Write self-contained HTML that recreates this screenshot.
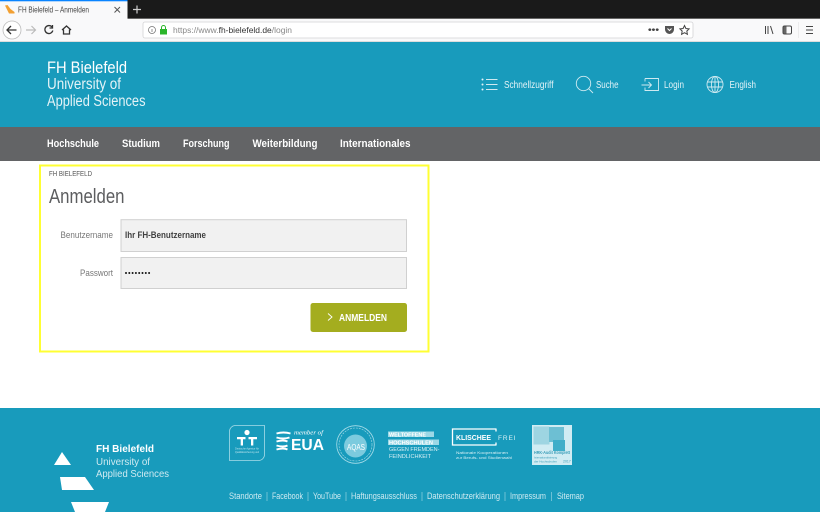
<!DOCTYPE html>
<html lang="de"><head><meta charset="utf-8"><title>FH Bielefeld - Anmelden</title>
<style>
html,body{margin:0;padding:0;width:820px;height:512px;overflow:hidden;background:#fff}
svg{display:block;filter:blur(.3px)}
text{font-family:"Liberation Sans",sans-serif}
</style></head><body>
<svg width="820" height="512" viewBox="0 0 820 512" xmlns="http://www.w3.org/2000/svg">
<!-- browser chrome -->
<rect width="820" height="19" fill="#1a1a1a"/>
<rect y="18" width="820" height="1" fill="#666"/>
<rect width="127.500" height="19" fill="#f9f9fa"/>
<rect width="127.500" height="1.300" fill="#0a84ff"/>
<path d="M5 5.500l2.500-.5 3 4 4 3 0 1.500H9z" fill="#f2a033"/>
<text x="18" y="12.500" font-size="8" fill="#444" textLength="71" lengthAdjust="spacingAndGlyphs">FH Bielefeld – Anmelden</text>
<path d="M114.500 7l5.500 5.500M120 7l-5.500 5.500" stroke="#555" stroke-width="1" fill="none"/>
<path d="M137 5.500v8M133 9.500h8" stroke="#ccc" stroke-width="1.200"/>
<rect y="19" width="820" height="23" fill="#f9f9fa"/>
<rect y="41" width="820" height="1" fill="#ddd"/>
<circle cx="12" cy="30" r="9" fill="#fff" stroke="#bbb" stroke-width=".8"/>
<path d="M16.500 30h-9M11 26l-4 4 4 4" stroke="#333" stroke-width="1.300" fill="none"/>
<path d="M26 30h9M31.500 26l4 4-4 4" stroke="#bbb" stroke-width="1.200" fill="none"/>
<path d="M52 27a4 4 0 1 0 .8 3.500M52.500 25v3h-3" stroke="#333" stroke-width="1.300" fill="none"/>
<path d="M62 30l4.500-4 4.500 4M63.500 29.500v4.500h6v-4.500" stroke="#333" stroke-width="1.300" fill="none"/>
<rect x="143" y="22" width="550" height="16" rx="2" fill="#fff" stroke="#d3d3d5" stroke-width=".8"/>
<circle cx="152" cy="30" r="3.500" fill="none" stroke="#777" stroke-width=".8"/>
<path d="M152 29v3" stroke="#777" stroke-width=".8"/>
<rect x="160" y="29" width="7" height="5.500" fill="#2ab52a"/>
<path d="M161.500 29v-1.500a2 2 0 0 1 4 0V29" stroke="#2ab52a" fill="none"/>
<text x="173" y="33" font-size="8.500" fill="#888" textLength="119" lengthAdjust="spacingAndGlyphs">https://www.<tspan fill="#333">fh-bielefeld.de</tspan>/login</text>
<text x="648" y="32.500" font-size="9" font-weight="bold" fill="#444" textLength="11" lengthAdjust="spacingAndGlyphs">•••</text>
<path d="M665 26h9v3.500a4.500 4.500 0 0 1-9 0z" fill="#555"/>
<path d="M667.500 28.500l2 2 2-2" stroke="#fff" fill="none"/>
<path d="M684.500 25.500l1.400 3 3.200.4-2.300 2.200.6 3.200-2.900-1.600-2.900 1.600.6-3.200-2.300-2.200 3.200-.4z" fill="none" stroke="#444"/>
<path d="M765.500 26v8M768 26v8M770.500 26l2.500 8" stroke="#444" stroke-width="1" fill="none"/>
<rect x="783" y="26" width="8.500" height="8" rx="1.500" fill="none" stroke="#444"/>
<rect x="783.500" y="26.500" width="3" height="7" fill="#666"/>
<path d="M806 26.500h7M806 30h7M806 33.500h7" stroke="#444" stroke-width="1.100"/>
<path d="M798.500 22v16" stroke="#e6e6e6" stroke-width=".7"/>
<!-- header -->
<rect y="42" width="820" height="85" fill="#189bbc"/>
<text x="47" y="73" font-size="16.500" fill="#fff" textLength="80" lengthAdjust="spacingAndGlyphs">FH Bielefeld</text>
<text x="47" y="89" font-size="15.500" fill="#e4f3f7" textLength="74" lengthAdjust="spacingAndGlyphs">University of</text>
<text x="47" y="106" font-size="15.500" fill="#e4f3f7" textLength="98.500" lengthAdjust="spacingAndGlyphs">Applied Sciences</text>
<g fill="#e3f3f7" font-size="10.500">
<text x="504" y="88" textLength="49.500" lengthAdjust="spacingAndGlyphs">Schnellzugriff</text>
<text x="596" y="88" textLength="22.500" lengthAdjust="spacingAndGlyphs">Suche</text>
<text x="664" y="88" textLength="20" lengthAdjust="spacingAndGlyphs">Login</text>
<text x="729.500" y="88" textLength="26.500" lengthAdjust="spacingAndGlyphs">English</text>
</g>
<g style="stroke:#cfeaf1;fill:none;stroke-width:.9">
<path d="M486 79.500h11.500M486 84.500h11.500M486 89.500h11.500"/>
<circle cx="583.500" cy="83.500" r="7.200"/>
<path d="M588.500 88.500l4.500 4.500"/>
<path d="M645 78.500h13.500v12H645v-3M645 81.500v-3M641.500 85h10M648.500 82l3 3-3 3"/>
<circle cx="715" cy="84.500" r="8"/>
<ellipse cx="715" cy="84.500" rx="3.600" ry="8"/>
<path d="M715 76.500v16M707.300 82h15.400M707.300 87h15.400"/>
</g>
<circle cx="482.500" cy="79.500" r="1" fill="#e3f3f7"/><circle cx="482.500" cy="84.500" r="1" fill="#e3f3f7"/><circle cx="482.500" cy="89.500" r="1" fill="#e3f3f7"/>
<!-- nav -->
<rect y="127" width="820" height="34" fill="#636466"/>
<g fill="#fff" font-size="11" font-weight="bold">
<text x="47" y="147" textLength="52" lengthAdjust="spacingAndGlyphs">Hochschule</text>
<text x="122" y="147" textLength="38" lengthAdjust="spacingAndGlyphs">Studium</text>
<text x="183" y="147" textLength="46.500" lengthAdjust="spacingAndGlyphs">Forschung</text>
<text x="252.500" y="147" textLength="65" lengthAdjust="spacingAndGlyphs">Weiterbildung</text>
<text x="340" y="147" textLength="70.500" lengthAdjust="spacingAndGlyphs">Internationales</text>
</g>
<!-- form -->
<rect x="40" y="165.500" width="388.500" height="186" fill="#fff" stroke="#ffff33" stroke-width="2"/>
<text x="49" y="176" font-size="7.500" fill="#555" textLength="43" lengthAdjust="spacingAndGlyphs">FH BIELEFELD</text>
<text x="49" y="203" font-size="20" fill="#5c5d5f" textLength="75.500" lengthAdjust="spacingAndGlyphs">Anmelden</text>
<text x="113" y="238" font-size="9.500" fill="#777" text-anchor="end" textLength="52.500" lengthAdjust="spacingAndGlyphs">Benutzername</text>
<text x="113" y="276" font-size="9.500" fill="#777" text-anchor="end" textLength="33" lengthAdjust="spacingAndGlyphs">Passwort</text>
<rect x="121" y="219.700" width="285.500" height="31.800" fill="#f1f1f1" stroke="#d0d0d0" stroke-width="1"/>
<rect x="121" y="257.500" width="285.500" height="31" fill="#f1f1f1" stroke="#d0d0d0" stroke-width="1"/>
<text x="125" y="238" font-size="9.500" fill="#222" font-weight="bold" textLength="81" lengthAdjust="spacingAndGlyphs" opacity=".85">Ihr FH-Benutzername</text>
<g fill="#111"><circle cx="126" cy="273" r="1"/><circle cx="129.300" cy="273" r="1"/><circle cx="132.600" cy="273" r="1"/><circle cx="135.900" cy="273" r="1"/><circle cx="139.200" cy="273" r="1"/><circle cx="142.500" cy="273" r="1"/><circle cx="145.800" cy="273" r="1"/><circle cx="149.100" cy="273" r="1"/></g>
<rect x="310.500" y="303" width="96.500" height="29" rx="2.500" fill="#a4ad1f"/>
<path d="M328 313.500l4 3.500-4 3.500" stroke="#fff" stroke-width=".9" fill="none"/>
<text x="339" y="321" font-size="10" font-weight="bold" fill="#fff" textLength="48" lengthAdjust="spacingAndGlyphs">ANMELDEN</text>
<!-- footer -->
<rect y="408" width="820" height="104" fill="#189bbc"/>
<path d="M54 465L62 452 71 465z" fill="#fff"/>
<path d="M60 477H85L94 490H62z" fill="#fff"/>
<path d="M71 502H109L105 512H75z" fill="#fff"/>
<text x="96" y="452" font-size="10.500" font-weight="bold" fill="#fff" textLength="58" lengthAdjust="spacingAndGlyphs">FH Bielefeld</text>
<text x="96" y="465" font-size="10.500" fill="#cfeaf1" textLength="54" lengthAdjust="spacingAndGlyphs">University of</text>
<text x="96" y="477" font-size="10.500" fill="#cfeaf1" textLength="73" lengthAdjust="spacingAndGlyphs">Applied Sciences</text>
<g font-size="8.800" fill="#cdeaf1">
<text x="229" y="499" textLength="33" lengthAdjust="spacingAndGlyphs">Standorte</text>
<text x="272" y="499" textLength="31" lengthAdjust="spacingAndGlyphs">Facebook</text>
<text x="313" y="499" textLength="28" lengthAdjust="spacingAndGlyphs">YouTube</text>
<text x="351" y="499" textLength="66" lengthAdjust="spacingAndGlyphs">Haftungsausschluss</text>
<text x="427" y="499" textLength="73" lengthAdjust="spacingAndGlyphs">Datenschutzerklärung</text>
<text x="510" y="499" textLength="36" lengthAdjust="spacingAndGlyphs">Impressum</text>
<text x="557" y="499" textLength="27" lengthAdjust="spacingAndGlyphs">Sitemap</text>
</g>
<path d="M267 492v9M308 492v9M346 492v9M422 492v9M505 492v9M551.500 492v9" stroke="#8fd0e0" stroke-width=".7"/>
<!-- logos -->
<path d="M235 425.500h29.500v29a6 6 0 0 1-6 6H229.500v-29.500a6 6 0 0 1 5.500-5.500z" fill="none" stroke="#a9dde9" stroke-width=".8"/>
<circle cx="247" cy="432.500" r="2.600" fill="#fff"/>
<path d="M237 437h8.500v2.200h-2.500v6.300h-2.300v-6.300H237zM248.500 437h8.500v2.200h-3.700v6.300H251v-6.300h-2.500z" fill="#fff"/>
<text x="235" y="449.500" font-size="2.500" fill="#bfe5ee" textLength="24" lengthAdjust="spacingAndGlyphs">Deutsche Agentur für</text>
<text x="235" y="453" font-size="2.500" fill="#bfe5ee" textLength="24" lengthAdjust="spacingAndGlyphs">Qualitätssicherung und</text>
<path d="M276.500 433.500q7-2 14 0M276.500 437.500q7 2 13 0M276.500 441.500q7-2 11 0M276.500 445.500q7 2 11 0M276.500 449.500q7-2 11 0" stroke="#fff" stroke-width="1.900" fill="none"/>
<text x="294" y="434.500" font-size="6" font-style="italic" fill="#fff" textLength="29" lengthAdjust="spacingAndGlyphs" style="font-family:'Liberation Serif',serif">member of</text>
<text x="291" y="450" font-size="16" font-weight="bold" fill="#fff" textLength="33" lengthAdjust="spacingAndGlyphs">EUA</text>
<circle cx="355.500" cy="444.500" r="18.800" fill="none" stroke="#a9dde9" stroke-width=".8"/>
<circle cx="355.500" cy="444.500" r="16.500" fill="none" stroke="#a9dde9" stroke-width=".6" stroke-dasharray="2 1"/>
<circle cx="355.500" cy="446" r="11.500" fill="#7ccbde"/>
<text x="347" y="450" font-size="8" fill="#fff" textLength="18" lengthAdjust="spacingAndGlyphs">AQAS</text>
<path d="M388 431.500h46v5.500h-46zM388 439.500h51v5.500h-51z" fill="#9cd8e6"/>
<text x="389" y="436.500" font-size="5.500" font-weight="bold" fill="#fff" textLength="37" lengthAdjust="spacingAndGlyphs">WELTOFFENE</text>
<text x="389" y="444.500" font-size="5.500" font-weight="bold" fill="#fff" textLength="44" lengthAdjust="spacingAndGlyphs">HOCHSCHULEN</text>
<text x="389" y="451" font-size="5.500" fill="#d8f0f5" textLength="50.500" lengthAdjust="spacingAndGlyphs">GEGEN FREMDEN-</text>
<text x="389" y="458" font-size="5.500" fill="#d8f0f5" textLength="42" lengthAdjust="spacingAndGlyphs">FEINDLICHKEIT</text>
<path d="M496 429h-43.500v16H496M496 428.500v3M496 442.500v3" fill="none" stroke="#fff" stroke-width="1.300"/>
<text x="456" y="440" font-size="7" font-weight="bold" fill="#fff" textLength="35" lengthAdjust="spacingAndGlyphs">KLISCHEE</text>
<text x="498" y="440" font-size="6.500" fill="#d8f0f5" textLength="17.500">FREI</text>
<text x="456" y="454" font-size="3.600" fill="#d8f0f5" textLength="52" lengthAdjust="spacingAndGlyphs">Nationale Kooperationen</text>
<text x="456" y="459" font-size="3.600" fill="#d8f0f5" textLength="56" lengthAdjust="spacingAndGlyphs">zur Berufs- und Studienwahl</text>
<rect x="532" y="425" width="40" height="40" fill="#d0ecf3"/>
<rect x="533.500" y="426.500" width="16" height="18" fill="#9ed5e2"/>
<rect x="549" y="427" width="15" height="15" fill="#6dbfd3"/>
<rect x="553" y="440" width="12" height="11" fill="#3faec9"/>
<text x="534" y="454" font-size="4.500" font-weight="bold" fill="#3a9db8" textLength="36" lengthAdjust="spacingAndGlyphs">HRK-Audit Komplett</text>
<text x="534" y="458.500" font-size="3" fill="#3a9db8" textLength="23" lengthAdjust="spacingAndGlyphs">Internationalisierung</text>
<text x="534" y="462.500" font-size="3" fill="#3a9db8" textLength="23" lengthAdjust="spacingAndGlyphs">der Hochschulen</text>
<text x="563" y="462.500" font-size="3.500" fill="#3a9db8">2017</text>
</svg>
</body></html>
